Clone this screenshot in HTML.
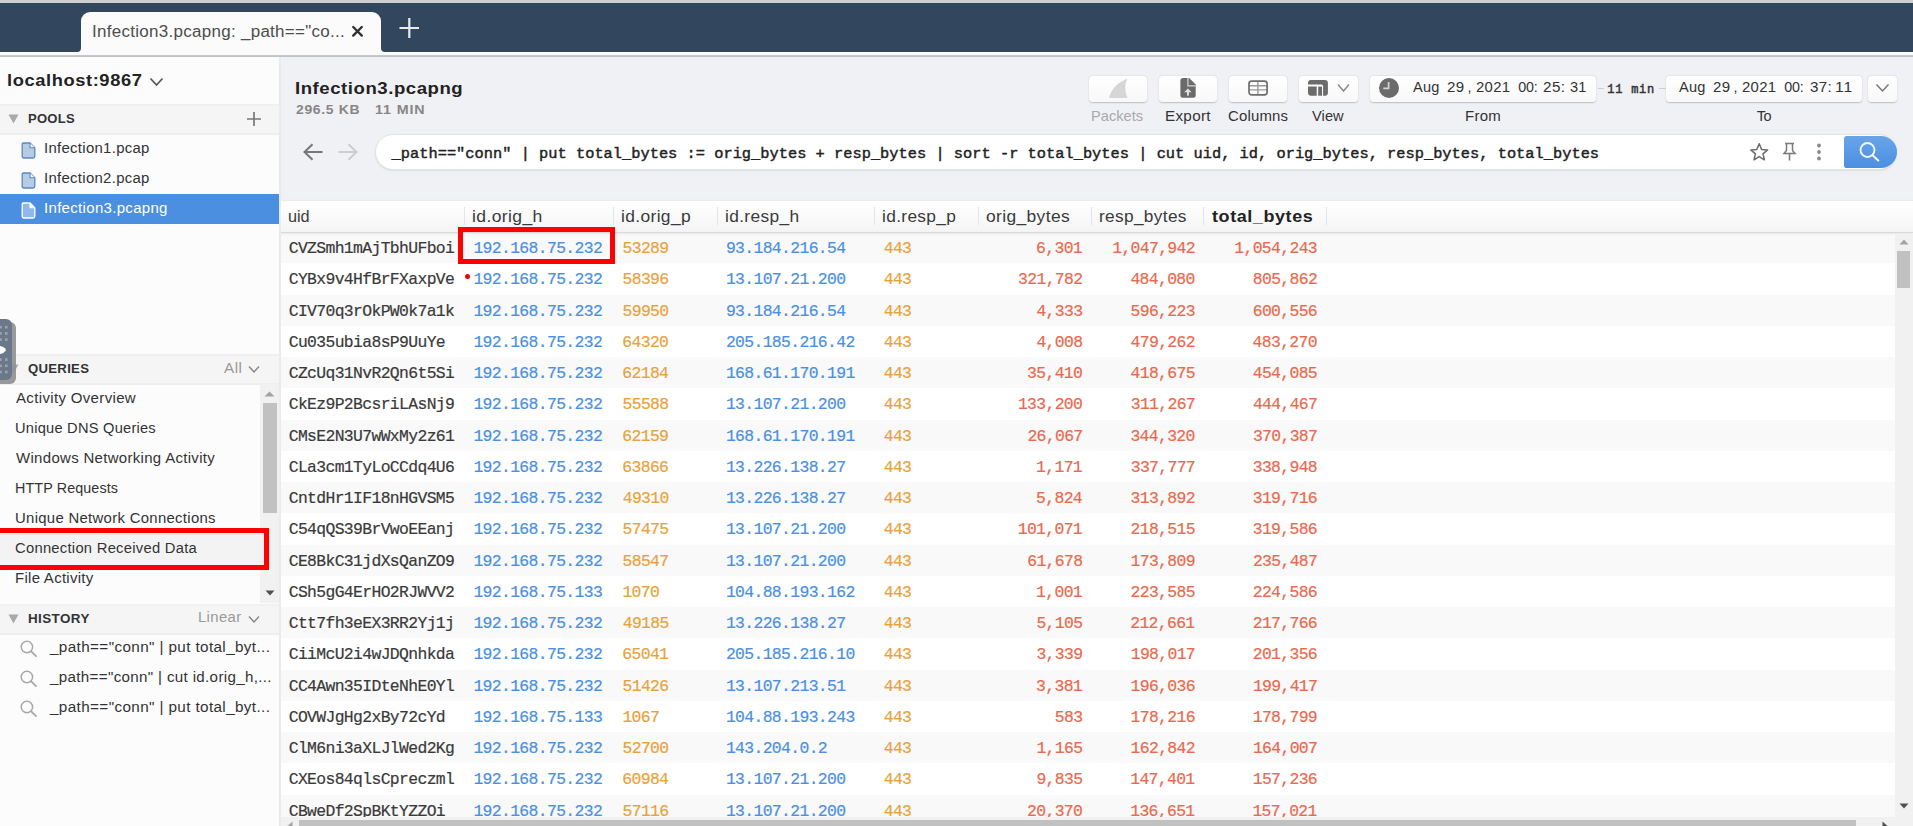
<!DOCTYPE html>
<html><head><meta charset="utf-8"><style>
html,body{margin:0;padding:0;}
body{width:1913px;height:826px;overflow:hidden;position:relative;background:#fafafa;font-family:"Liberation Sans",sans-serif;}
svg{overflow:visible}
</style></head><body>
<div style="position:absolute;left:0px;top:0px;width:1913px;height:3px;background:#cfcfcf"></div>
<div style="position:absolute;left:0px;top:3px;width:1913px;height:49px;background:#32465e"></div>
<div style="position:absolute;left:0px;top:51.6px;width:1913px;height:3.4px;background:#fbfbfb"></div>
<div style="position:absolute;left:0px;top:55px;width:1913px;height:2px;background:linear-gradient(#c9cacd,#bfc0c4)"></div>
<div style="position:absolute;left:80.5px;top:11.8px;width:300px;height:40px;background:#fbfbfb;border-radius:9px 9px 0 0"></div>
<div style="position:absolute;left:76.5px;top:46px;width:5px;height:6px;background:#fbfbfb"></div>
<div style="position:absolute;left:70px;top:40px;width:10.5px;height:11.6px;background:#32465e;border-bottom-right-radius:4px"></div>
<div style="position:absolute;left:379.5px;top:46px;width:5px;height:6px;background:#fbfbfb"></div>
<div style="position:absolute;left:380.5px;top:40px;width:10px;height:11.6px;background:#32465e;border-bottom-left-radius:4px"></div>
<svg style="position:absolute;left:351px;top:25px;" width="13" height="13" viewBox="0 0 13 13"><path d="M2.2 2L10.8 10.6M10.8 2L2.2 10.6" stroke="#2e2e2e" stroke-width="2.3" stroke-linecap="round"/></svg>
<svg style="position:absolute;left:399px;top:18px;" width="21" height="21" viewBox="0 0 21 21"><path d="M10.3 0V20M0.5 10H20" stroke="#e9ebef" stroke-width="2.2"/></svg>
<div style="position:absolute;left:0px;top:57px;width:279px;height:769px;background:#fcfcfc"></div>
<div style="position:absolute;left:279px;top:57px;width:2px;height:769px;background:#e9ecef"></div>
<svg style="position:absolute;left:149px;top:77px;" width="15" height="10" viewBox="0 0 15 10"><path d="M1.5 1.5L7.5 8L13.5 1.5" stroke="#555" stroke-width="1.7" fill="none"/></svg>
<div style="position:absolute;left:0px;top:104px;width:279px;height:2px;background:#eef0f2"></div>
<div style="position:absolute;left:0px;top:106px;width:279px;height:27px;background:#f5f5f5"></div>
<div style="position:absolute;left:0px;top:133px;width:279px;height:1.5px;background:#eceef0"></div>
<svg style="position:absolute;left:8px;top:114px;" width="11" height="10" viewBox="0 0 11 10"><path d="M0.5 0.5H10.5L5.5 9.5Z" fill="#a9a9a9"/></svg>
<svg style="position:absolute;left:246px;top:111px;" width="16" height="16" viewBox="0 0 16 16"><path d="M8 1V15M1 8H15" stroke="#777" stroke-width="1.7"/></svg>
<div style="position:absolute;left:0px;top:194px;width:279px;height:30px;background:#4a8fe0"></div>
<svg style="position:absolute;left:21px;top:141.5px;" width="15" height="17" viewBox="0 0 15 17"><path d="M2.2 1H9L13.8 5.8V14.2Q13.8 16 12 16H3Q1.2 16 1.2 14.2V2.2Q1.2 1 2.2 1Z" fill="#b7cbe5" stroke="#5b88c2" stroke-width="1.3"/><path d="M9 1V5.8H13.8" fill="#fafafa" stroke="#5b88c2" stroke-width="1.1"/></svg>
<svg style="position:absolute;left:21px;top:171.5px;" width="15" height="17" viewBox="0 0 15 17"><path d="M2.2 1H9L13.8 5.8V14.2Q13.8 16 12 16H3Q1.2 16 1.2 14.2V2.2Q1.2 1 2.2 1Z" fill="#b7cbe5" stroke="#5b88c2" stroke-width="1.3"/><path d="M9 1V5.8H13.8" fill="#fafafa" stroke="#5b88c2" stroke-width="1.1"/></svg>
<svg style="position:absolute;left:21px;top:201.5px;" width="15" height="17" viewBox="0 0 15 17"><path d="M2.2 1H9L13.8 5.8V14.2Q13.8 16 12 16H3Q1.2 16 1.2 14.2V2.2Q1.2 1 2.2 1Z" fill="#8fb8ec" stroke="#ffffff" stroke-width="1.3"/><path d="M9 1V5.8H13.8" fill="#fafafa" stroke="#ffffff" stroke-width="1.1"/></svg>
<div style="position:absolute;left:0px;top:354px;width:279px;height:2px;background:#eef0f2"></div>
<div style="position:absolute;left:0px;top:356px;width:279px;height:27px;background:#f5f5f5"></div>
<div style="position:absolute;left:0px;top:383px;width:279px;height:1.5px;background:#eceef0"></div>
<svg style="position:absolute;left:8px;top:364px;" width="11" height="10" viewBox="0 0 11 10"><path d="M0.5 0.5H10.5L5.5 9.5Z" fill="#a9a9a9"/></svg>
<svg style="position:absolute;left:248px;top:365px;" width="12" height="9" viewBox="0 0 12 9"><path d="M1 1.5L6 7L11 1.5" stroke="#888" stroke-width="1.5" fill="none"/></svg>
<div style="position:absolute;left:0px;top:533px;width:264px;height:31.7px;background:#f3f3f3"></div>
<div style="position:absolute;left:260px;top:384px;width:19px;height:219px;background:#f1f1f1"></div>
<svg style="position:absolute;left:264px;top:391.3px;" width="11" height="6" viewBox="0 0 11 6"><path d="M0.5 5.5L5.5 0.5L10.5 5.5Z" fill="#a3a3a3"/></svg>
<div style="position:absolute;left:263px;top:403px;width:13.5px;height:110px;background:#c1c1c1"></div>
<svg style="position:absolute;left:265px;top:590px;" width="10" height="6" viewBox="0 0 10 6"><path d="M0.5 0.5H9.5L5 5.5Z" fill="#505050"/></svg>
<div style="position:absolute;left:0px;top:604px;width:279px;height:2px;background:#eef0f2"></div>
<div style="position:absolute;left:0px;top:606px;width:279px;height:27px;background:#f5f5f5"></div>
<div style="position:absolute;left:0px;top:633px;width:279px;height:1.5px;background:#eceef0"></div>
<svg style="position:absolute;left:8px;top:614px;" width="11" height="10" viewBox="0 0 11 10"><path d="M0.5 0.5H10.5L5.5 9.5Z" fill="#a9a9a9"/></svg>
<svg style="position:absolute;left:248px;top:615px;" width="12" height="9" viewBox="0 0 12 9"><path d="M1 1.5L6 7L11 1.5" stroke="#888" stroke-width="1.5" fill="none"/></svg>
<svg style="position:absolute;left:20px;top:641px;" width="18" height="17" viewBox="0 0 18 17"><circle cx="6.9" cy="6" r="5.7" stroke="#a8a8a8" stroke-width="1.5" fill="none"/><path d="M11.2 10.4L16 15.2" stroke="#a8a8a8" stroke-width="1.8" stroke-linecap="round"/></svg>
<svg style="position:absolute;left:20px;top:671px;" width="18" height="17" viewBox="0 0 18 17"><circle cx="6.9" cy="6" r="5.7" stroke="#a8a8a8" stroke-width="1.5" fill="none"/><path d="M11.2 10.4L16 15.2" stroke="#a8a8a8" stroke-width="1.8" stroke-linecap="round"/></svg>
<svg style="position:absolute;left:20px;top:701px;" width="18" height="17" viewBox="0 0 18 17"><circle cx="6.9" cy="6" r="5.7" stroke="#a8a8a8" stroke-width="1.5" fill="none"/><path d="M11.2 10.4L16 15.2" stroke="#a8a8a8" stroke-width="1.8" stroke-linecap="round"/></svg>
<div style="position:absolute;left:-6px;top:528px;width:275.2px;height:41.7px;box-sizing:border-box;border:5px solid #fe0000"></div>
<div style="position:absolute;left:-10px;top:322px;width:25.5px;height:62px;background:#8f8f8f;border-radius:6px;opacity:0.9"></div>
<div style="position:absolute;left:-10px;top:318.7px;width:22px;height:61.5px;background:#6b7889;border-radius:6px"></div>
<svg style="position:absolute;left:0px;top:318px;" width="14" height="62" viewBox="0 0 14 62"><rect x="-0.8" y="7.899999999999989" width="2.6" height="2.6" fill="#9aa4b1"/><rect x="5.0" y="7.899999999999989" width="2.6" height="2.6" fill="#9aa4b1"/><rect x="-0.8" y="14.099999999999977" width="2.6" height="2.6" fill="#9aa4b1"/><rect x="5.0" y="14.099999999999977" width="2.6" height="2.6" fill="#9aa4b1"/><rect x="-0.8" y="20.300000000000022" width="2.6" height="2.6" fill="#9aa4b1"/><rect x="5.0" y="20.300000000000022" width="2.6" height="2.6" fill="#9aa4b1"/><rect x="-0.8" y="40.300000000000026" width="2.6" height="2.6" fill="#9aa4b1"/><rect x="5.0" y="40.300000000000026" width="2.6" height="2.6" fill="#9aa4b1"/><rect x="-0.8" y="46.500000000000014" width="2.6" height="2.6" fill="#9aa4b1"/><rect x="5.0" y="46.500000000000014" width="2.6" height="2.6" fill="#9aa4b1"/><rect x="-0.8" y="52.7" width="2.6" height="2.6" fill="#9aa4b1"/><rect x="5.0" y="52.7" width="2.6" height="2.6" fill="#9aa4b1"/><path d="M-1 28Q4 28 6 32Q4 36 -1 36Z" fill="#ffffff"/></svg>
<div style="position:absolute;left:281px;top:57px;width:1632px;height:144px;background:#f0f1f5"></div>
<div style="position:absolute;left:1088.8px;top:75.5px;width:58.100000000000136px;height:26.299999999999997px;box-sizing:border-box;border-radius:4px;background:linear-gradient(#ffffff,#f8f8f8);box-shadow:0 0.5px 1.5px rgba(0,0,0,0.22)"></div>
<div style="position:absolute;left:1158.6px;top:75.5px;width:58.40000000000009px;height:26.299999999999997px;box-sizing:border-box;border-radius:4px;background:linear-gradient(#ffffff,#f8f8f8);box-shadow:0 0.5px 1.5px rgba(0,0,0,0.22)"></div>
<div style="position:absolute;left:1228.8px;top:75.5px;width:58.100000000000136px;height:26.299999999999997px;box-sizing:border-box;border-radius:4px;background:linear-gradient(#ffffff,#f8f8f8);box-shadow:0 0.5px 1.5px rgba(0,0,0,0.22)"></div>
<div style="position:absolute;left:1298.6px;top:75.5px;width:59.40000000000009px;height:26.299999999999997px;box-sizing:border-box;border-radius:4px;background:linear-gradient(#ffffff,#f8f8f8);box-shadow:0 0.5px 1.5px rgba(0,0,0,0.22)"></div>
<div style="position:absolute;left:1370px;top:75.5px;width:225.70000000000005px;height:26.299999999999997px;box-sizing:border-box;border-radius:4px;background:linear-gradient(#ffffff,#f8f8f8);box-shadow:0 0.5px 1.5px rgba(0,0,0,0.22)"></div>
<div style="position:absolute;left:1666.2px;top:75.5px;width:195.79999999999995px;height:26.299999999999997px;box-sizing:border-box;border-radius:4px;background:linear-gradient(#ffffff,#f8f8f8);box-shadow:0 0.5px 1.5px rgba(0,0,0,0.22)"></div>
<div style="position:absolute;left:1867.7px;top:75.5px;width:29.09999999999991px;height:26.299999999999997px;box-sizing:border-box;border-radius:4px;background:linear-gradient(#ffffff,#f8f8f8);box-shadow:0 0.5px 1.5px rgba(0,0,0,0.22)"></div>
<svg style="position:absolute;left:1108px;top:77px;" width="21" height="22" viewBox="0 0 21 22"><path d="M1 21Q4 8 19.5 1.5Q15 10 19.5 21Z" fill="#d6d6d6"/></svg>
<svg style="position:absolute;left:1179px;top:77px;" width="18" height="22" viewBox="0 0 18 22"><path d="M4 1.1H10.2L16.7 7.6V18.2Q16.7 20.7 14.2 20.7H3.9Q1.4 20.7 1.4 18.2V3.6Q1.4 1.1 4 1.1Z" fill="#6b6b6b"/><path d="M8.9 1.1V8.9H16.7" stroke="#d8d8d8" stroke-width="1.2" fill="none"/><path d="M5.2 15.2L8.9 11.4L12.6 15.2Z" fill="#e4e4e4"/><rect x="8" y="14.6" width="1.9" height="4" fill="#e4e4e4"/></svg>
<svg style="position:absolute;left:1247px;top:79px;" width="22" height="18" viewBox="0 0 22 18"><path d="M10.9 2V16M2 6.7H20M2 10.9H20" stroke="#9a9a9a" stroke-width="1.4"/><rect x="2" y="2.05" width="18.1" height="13.9" rx="2.6" stroke="#6e6e6e" stroke-width="1.7" fill="none"/></svg>
<svg style="position:absolute;left:1307px;top:79px;" width="22" height="18" viewBox="0 0 22 18"><path d="M1 4.1Q1 1.1 4 1.1H17.9Q20.9 1.1 20.9 4.1V13.7Q20.9 16.7 17.9 16.7H16.1V7.2Q16.1 5.4 14.3 5.4H1Z" fill="#6b6b6b"/><path d="M1 7.6H9.7V16.7H4Q1 16.7 1 13.7Z" fill="#6b6b6b"/><rect x="11.2" y="7.6" width="3.8" height="9.1" fill="#6b6b6b"/></svg>
<svg style="position:absolute;left:1337px;top:83px;" width="13" height="10" viewBox="0 0 13 10"><path d="M1 1.5L6.5 8L12 1.5" stroke="#8a8a8a" stroke-width="1.5" fill="none"/></svg>
<svg style="position:absolute;left:1378px;top:77px;" width="22" height="22" viewBox="0 0 22 22"><circle cx="11" cy="11" r="10" fill="#6b6b6b"/><path d="M10.6 5V11.3H5.3" stroke="#d4d4d4" stroke-width="1.7" fill="none"/></svg>
<svg style="position:absolute;left:1875px;top:83px;" width="15" height="10" viewBox="0 0 15 10"><path d="M1.5 1.5L7.5 8L13.5 1.5" stroke="#777" stroke-width="1.5" fill="none"/></svg>
<div style="position:absolute;left:1597.5px;top:88px;width:6px;height:1px;background:#cfcfcf"></div>
<div style="position:absolute;left:1658.5px;top:88px;width:7px;height:1px;background:#cfcfcf"></div>
<svg style="position:absolute;left:302px;top:142px;" width="22" height="20" viewBox="0 0 22 20"><path d="M20.5 10H3M10.5 2.2L2.5 10L10.5 17.8" stroke="#767676" stroke-width="2" fill="none"/></svg>
<svg style="position:absolute;left:337px;top:142px;" width="22" height="20" viewBox="0 0 22 20"><path d="M1.5 10H19M11.5 2.2L19.5 10L11.5 17.8" stroke="#cdcdcd" stroke-width="2" fill="none"/></svg>
<div style="position:absolute;left:375.3px;top:133.6px;width:1521.7px;height:36px;box-sizing:border-box;border:1px solid #e3e3e3;border-radius:18px;background:#ffffff;box-shadow:0 1px 1.5px rgba(0,0,0,0.08)"></div>
<div style="position:absolute;left:1844.3px;top:135.6px;width:52.5px;height:32.4px;border-radius:3px 17px 17px 3px;background:linear-gradient(#6aa4e9,#4a8fe1)"></div>
<svg style="position:absolute;left:1857px;top:140px;" width="25" height="24" viewBox="0 0 25 24"><circle cx="10.5" cy="10" r="7" stroke="#f4f7fb" stroke-width="1.9" fill="none"/><path d="M15.6 15.3L21.2 20.6" stroke="#f4f7fb" stroke-width="2.1" stroke-linecap="round"/></svg>
<svg style="position:absolute;left:1749px;top:142px;" width="21" height="20" viewBox="0 0 21 20"><path d="M10.2 1.8L12.6 7.4L18.6 7.9L14 11.9L15.4 17.8L10.2 14.6L5 17.8L6.4 11.9L1.8 7.9L7.8 7.4Z" stroke="#6b6b6b" stroke-width="1.5" fill="none" stroke-linejoin="round"/></svg>
<svg style="position:absolute;left:1782px;top:142px;" width="15" height="20" viewBox="0 0 15 20"><path d="M3 1.5H12M4.5 1.5V8.5L2 11.5H13L10.5 8.5V1.5M7.5 11.5V18.5" stroke="#7a7a7a" stroke-width="1.5" fill="none"/></svg>
<svg style="position:absolute;left:1815px;top:143px;" width="8" height="18" viewBox="0 0 8 18"><circle cx="4" cy="2.5" r="1.9" fill="#8a8a8a"/><circle cx="4" cy="9" r="1.9" fill="#8a8a8a"/><circle cx="4" cy="15.5" r="1.9" fill="#8a8a8a"/></svg>
<div style="position:absolute;left:281px;top:232px;width:1613.5px;height:585px;background:#ffffff"></div>
<div style="position:absolute;left:281px;top:232.0px;width:1613.5px;height:31.25px;background:#f9f9f9"></div>
<div style="position:absolute;left:281px;top:294.5px;width:1613.5px;height:31.25px;background:#f9f9f9"></div>
<div style="position:absolute;left:281px;top:357.0px;width:1613.5px;height:31.25px;background:#f9f9f9"></div>
<div style="position:absolute;left:281px;top:419.5px;width:1613.5px;height:31.25px;background:#f9f9f9"></div>
<div style="position:absolute;left:281px;top:482.0px;width:1613.5px;height:31.25px;background:#f9f9f9"></div>
<div style="position:absolute;left:281px;top:544.5px;width:1613.5px;height:31.25px;background:#f9f9f9"></div>
<div style="position:absolute;left:281px;top:607.0px;width:1613.5px;height:31.25px;background:#f9f9f9"></div>
<div style="position:absolute;left:281px;top:669.5px;width:1613.5px;height:31.25px;background:#f9f9f9"></div>
<div style="position:absolute;left:281px;top:732.0px;width:1613.5px;height:31.25px;background:#f9f9f9"></div>
<div style="position:absolute;left:281px;top:794.5px;width:1613.5px;height:31.25px;background:#f9f9f9"></div>
<div style="position:absolute;left:281px;top:198.5px;width:1632px;height:2.5px;background:linear-gradient(#f0f1f5,#e9eaec)"></div>
<div style="position:absolute;left:281px;top:201px;width:1632px;height:31.5px;background:linear-gradient(#ffffff,#f4f4f4)"></div>
<div style="position:absolute;left:281px;top:232.2px;width:1632px;height:1.3px;background:#d9d9d9;box-shadow:0 1px 2px rgba(0,0,0,0.10)"></div>
<div style="position:absolute;left:464.1px;top:207px;width:1px;height:18px;background:#e1e4e8"></div>
<div style="position:absolute;left:613.1px;top:207px;width:1px;height:18px;background:#e1e4e8"></div>
<div style="position:absolute;left:716.6px;top:207px;width:1px;height:18px;background:#e1e4e8"></div>
<div style="position:absolute;left:874.2px;top:207px;width:1px;height:18px;background:#e1e4e8"></div>
<div style="position:absolute;left:978.2px;top:207px;width:1px;height:18px;background:#e1e4e8"></div>
<div style="position:absolute;left:1090.7px;top:207px;width:1px;height:18px;background:#e1e4e8"></div>
<div style="position:absolute;left:1203.2px;top:207px;width:1px;height:18px;background:#e1e4e8"></div>
<div style="position:absolute;left:1325.9px;top:207px;width:1px;height:18px;background:#e1e4e8"></div>
<div style="position:absolute;left:464.6px;top:273.6px;width:5.2px;height:5.2px;border-radius:50%;background:#f00000"></div>
<div style="position:absolute;left:458px;top:227px;width:157px;height:37px;box-sizing:border-box;border:5px solid #fe0000"></div>
<div style="position:absolute;left:1894.5px;top:233.5px;width:18.5px;height:583.5px;background:#f1f1f1"></div>
<svg style="position:absolute;left:1898.5px;top:238.5px;" width="10" height="6" viewBox="0 0 10 6"><path d="M0.5 5.5L5 0.5L9.5 5.5Z" fill="#a3a3a3"/></svg>
<div style="position:absolute;left:1897px;top:251px;width:13.3px;height:37px;background:#c1c1c1"></div>
<svg style="position:absolute;left:1898.5px;top:803px;" width="10" height="6" viewBox="0 0 10 6"><path d="M0.5 0.5H9.5L5 5.5Z" fill="#505050"/></svg>
<span style="position:absolute;left:91.72px;top:23.58px;font-family:'Liberation Sans';font-size:16px;font-weight:400;color:#4d4d4d;letter-spacing:0.277px;line-height:1;white-space:pre;transform:scaleX(1.0602);transform-origin:0 0;">Infection3.pcapng: _path==&quot;co...</span>
<span style="position:absolute;left:7.49px;top:72.57px;font-family:'Liberation Sans';font-size:16.6px;font-weight:700;color:#222;letter-spacing:0.542px;line-height:1;white-space:pre;transform:scaleX(1.1025);transform-origin:0 0;">localhost:9867</span>
<span style="position:absolute;left:27.77px;top:112.58px;font-family:'Liberation Sans';font-size:12.6px;font-weight:700;color:#333;letter-spacing:0.241px;line-height:1;white-space:pre;transform:scaleX(1.0349);transform-origin:0 0;">POOLS</span>
<span style="position:absolute;left:43.52px;top:141.25px;font-family:'Liberation Sans';font-size:14px;font-weight:400;color:#333;letter-spacing:0.277px;line-height:1;white-space:pre;transform:scaleX(1.0665);transform-origin:0 0;">Infection1.pcap</span>
<span style="position:absolute;left:43.52px;top:171.25px;font-family:'Liberation Sans';font-size:14px;font-weight:400;color:#333;letter-spacing:0.277px;line-height:1;white-space:pre;transform:scaleX(1.0665);transform-origin:0 0;">Infection2.pcap</span>
<span style="position:absolute;left:43.52px;top:201.25px;font-family:'Liberation Sans';font-size:14px;font-weight:400;color:#ffffff;letter-spacing:0.298px;line-height:1;white-space:pre;transform:scaleX(1.0706);transform-origin:0 0;">Infection3.pcapng</span>
<span style="position:absolute;left:28.08px;top:362.58px;font-family:'Liberation Sans';font-size:12.6px;font-weight:700;color:#333;letter-spacing:0.267px;line-height:1;white-space:pre;transform:scaleX(1.0451);transform-origin:0 0;">QUERIES</span>
<span style="position:absolute;left:224.00px;top:361.57px;font-family:'Liberation Sans';font-size:13.8px;font-weight:400;color:#9a9a9a;letter-spacing:0.458px;line-height:1;white-space:pre;transform:scaleX(1.1049);transform-origin:0 0;">All</span>
<span style="position:absolute;left:15.80px;top:391.35px;font-family:'Liberation Sans';font-size:14px;font-weight:400;color:#333;letter-spacing:0.306px;line-height:1;white-space:pre;transform:scaleX(1.0739);transform-origin:0 0;">Activity Overview</span>
<span style="position:absolute;left:14.75px;top:421.35px;font-family:'Liberation Sans';font-size:14px;font-weight:400;color:#333;letter-spacing:0.222px;line-height:1;white-space:pre;transform:scaleX(1.0459);transform-origin:0 0;">Unique DNS Queries</span>
<span style="position:absolute;left:15.80px;top:451.35px;font-family:'Liberation Sans';font-size:14px;font-weight:400;color:#333;letter-spacing:0.297px;line-height:1;white-space:pre;transform:scaleX(1.0693);transform-origin:0 0;">Windows Networking Activity</span>
<span style="position:absolute;left:14.68px;top:481.35px;font-family:'Liberation Sans';font-size:14px;font-weight:400;color:#333;letter-spacing:0.118px;line-height:1;white-space:pre;transform:scaleX(1.0221);transform-origin:0 0;">HTTP Requests</span>
<span style="position:absolute;left:14.74px;top:511.35px;font-family:'Liberation Sans';font-size:14px;font-weight:400;color:#333;letter-spacing:0.287px;line-height:1;white-space:pre;transform:scaleX(1.0637);transform-origin:0 0;">Unique Network Connections</span>
<span style="position:absolute;left:15.06px;top:541.35px;font-family:'Liberation Sans';font-size:14px;font-weight:400;color:#333;letter-spacing:0.250px;line-height:1;white-space:pre;transform:scaleX(1.0548);transform-origin:0 0;">Connection Received Data</span>
<span style="position:absolute;left:14.62px;top:571.35px;font-family:'Liberation Sans';font-size:14px;font-weight:400;color:#333;letter-spacing:0.256px;line-height:1;white-space:pre;transform:scaleX(1.0707);transform-origin:0 0;">File Activity</span>
<span style="position:absolute;left:27.75px;top:612.58px;font-family:'Liberation Sans';font-size:12.6px;font-weight:700;color:#333;letter-spacing:0.375px;line-height:1;white-space:pre;transform:scaleX(1.0661);transform-origin:0 0;">HISTORY</span>
<span style="position:absolute;left:198.12px;top:610.57px;font-family:'Liberation Sans';font-size:13.8px;font-weight:400;color:#9a9a9a;letter-spacing:0.345px;line-height:1;white-space:pre;transform:scaleX(1.0750);transform-origin:0 0;">Linear</span>
<span style="position:absolute;left:50.13px;top:640.35px;font-family:'Liberation Sans';font-size:14px;font-weight:400;color:#333;letter-spacing:0.341px;line-height:1;white-space:pre;transform:scaleX(1.0910);transform-origin:0 0;">_path==&quot;conn&quot; | put total_byt...</span>
<span style="position:absolute;left:50.12px;top:670.35px;font-family:'Liberation Sans';font-size:14px;font-weight:400;color:#333;letter-spacing:0.307px;line-height:1;white-space:pre;transform:scaleX(1.0821);transform-origin:0 0;">_path==&quot;conn&quot; | cut id.orig_h,...</span>
<span style="position:absolute;left:50.13px;top:700.35px;font-family:'Liberation Sans';font-size:14px;font-weight:400;color:#333;letter-spacing:0.341px;line-height:1;white-space:pre;transform:scaleX(1.0910);transform-origin:0 0;">_path==&quot;conn&quot; | put total_byt...</span>
<span style="position:absolute;left:294.50px;top:80.11px;font-family:'Liberation Sans';font-size:17px;font-weight:700;color:#222;letter-spacing:0.504px;line-height:1;white-space:pre;transform:scaleX(1.0923);transform-origin:0 0;">Infection3.pcapng</span>
<span style="position:absolute;left:295.54px;top:103.60px;font-family:'Liberation Sans';font-size:12.2px;font-weight:700;color:#868686;letter-spacing:0.603px;line-height:1;white-space:pre;transform:scaleX(1.1430);transform-origin:0 0;">296.5 KB</span>
<span style="position:absolute;left:375.38px;top:103.60px;font-family:'Liberation Sans';font-size:12.2px;font-weight:700;color:#868686;letter-spacing:0.728px;line-height:1;white-space:pre;transform:scaleX(1.1722);transform-origin:0 0;">11 MIN</span>
<span style="position:absolute;left:1413.20px;top:79.80px;font-family:'Liberation Sans';font-size:14.3px;font-weight:400;color:#333;letter-spacing:0.159px;line-height:1;white-space:pre;transform:scaleX(1.0197);transform-origin:0 0;">Aug</span>
<span style="position:absolute;left:1447.06px;top:79.80px;font-family:'Liberation Sans';font-size:14.3px;font-weight:400;color:#333;letter-spacing:0.474px;line-height:1;white-space:pre;transform:scaleX(1.0514);transform-origin:0 0;">29</span>
<span style="position:absolute;left:1467.50px;top:79.80px;font-family:'Liberation Sans';font-size:14.3px;font-weight:400;color:#333;letter-spacing:0.000px;line-height:1;white-space:pre;">,</span>
<span style="position:absolute;left:1476.17px;top:79.80px;font-family:'Liberation Sans';font-size:14.3px;font-weight:400;color:#333;letter-spacing:0.274px;line-height:1;white-space:pre;transform:scaleX(1.0422);transform-origin:0 0;">2021</span>
<span style="position:absolute;left:1518.20px;top:79.80px;font-family:'Liberation Sans';font-size:14.3px;font-weight:400;color:#333;letter-spacing:-0.153px;line-height:1;white-space:pre;">00:</span>
<span style="position:absolute;left:1543.35px;top:79.80px;font-family:'Liberation Sans';font-size:14.3px;font-weight:400;color:#333;letter-spacing:0.374px;line-height:1;white-space:pre;transform:scaleX(1.0668);transform-origin:0 0;">25:</span>
<span style="position:absolute;left:1569.59px;top:79.80px;font-family:'Liberation Sans';font-size:14.3px;font-weight:400;color:#333;letter-spacing:0.214px;line-height:1;white-space:pre;transform:scaleX(1.0222);transform-origin:0 0;">31</span>
<span style="position:absolute;left:1679.20px;top:79.80px;font-family:'Liberation Sans';font-size:14.3px;font-weight:400;color:#333;letter-spacing:0.159px;line-height:1;white-space:pre;transform:scaleX(1.0197);transform-origin:0 0;">Aug</span>
<span style="position:absolute;left:1713.06px;top:79.80px;font-family:'Liberation Sans';font-size:14.3px;font-weight:400;color:#333;letter-spacing:0.474px;line-height:1;white-space:pre;transform:scaleX(1.0514);transform-origin:0 0;">29</span>
<span style="position:absolute;left:1733.50px;top:79.80px;font-family:'Liberation Sans';font-size:14.3px;font-weight:400;color:#333;letter-spacing:0.000px;line-height:1;white-space:pre;">,</span>
<span style="position:absolute;left:1742.17px;top:79.80px;font-family:'Liberation Sans';font-size:14.3px;font-weight:400;color:#333;letter-spacing:0.274px;line-height:1;white-space:pre;transform:scaleX(1.0422);transform-origin:0 0;">2021</span>
<span style="position:absolute;left:1784.20px;top:79.80px;font-family:'Liberation Sans';font-size:14.3px;font-weight:400;color:#333;letter-spacing:-0.153px;line-height:1;white-space:pre;">00:</span>
<span style="position:absolute;left:1809.57px;top:79.80px;font-family:'Liberation Sans';font-size:14.3px;font-weight:400;color:#333;letter-spacing:0.339px;line-height:1;white-space:pre;transform:scaleX(1.0595);transform-origin:0 0;">37:</span>
<span style="position:absolute;left:1835.00px;top:79.80px;font-family:'Liberation Sans';font-size:14.3px;font-weight:400;color:#333;letter-spacing:0.770px;line-height:1;white-space:pre;transform:scaleX(1.0959);transform-origin:0 0;">11</span>
<span style="position:absolute;left:1607.20px;top:83.60px;font-family:'Liberation Mono';font-size:12px;font-weight:400;color:#333;letter-spacing:0.779px;line-height:1;white-space:pre;-webkit-text-stroke:0.45px #333;">11 min</span>
<span style="position:absolute;left:1091.39px;top:108.55px;font-family:'Liberation Sans';font-size:14.5px;font-weight:400;color:#a9a9a9;letter-spacing:0.038px;line-height:1;white-space:pre;transform:scaleX(1.0069);transform-origin:0 0;">Packets</span>
<span style="position:absolute;left:1164.84px;top:108.55px;font-family:'Liberation Sans';font-size:14.5px;font-weight:400;color:#333;letter-spacing:0.268px;line-height:1;white-space:pre;transform:scaleX(1.0518);transform-origin:0 0;">Export</span>
<span style="position:absolute;left:1227.68px;top:108.55px;font-family:'Liberation Sans';font-size:14.5px;font-weight:400;color:#333;letter-spacing:0.183px;line-height:1;white-space:pre;transform:scaleX(1.0303);transform-origin:0 0;">Columns</span>
<span style="position:absolute;left:1312.40px;top:108.55px;font-family:'Liberation Sans';font-size:14.5px;font-weight:400;color:#333;letter-spacing:0.067px;line-height:1;white-space:pre;transform:scaleX(1.0097);transform-origin:0 0;">View</span>
<span style="position:absolute;left:1464.96px;top:108.55px;font-family:'Liberation Sans';font-size:14.5px;font-weight:400;color:#333;letter-spacing:0.238px;line-height:1;white-space:pre;transform:scaleX(1.0349);transform-origin:0 0;">From</span>
<span style="position:absolute;left:1756.70px;top:108.55px;font-family:'Liberation Sans';font-size:14.5px;font-weight:400;color:#333;letter-spacing:-0.450px;line-height:1;white-space:pre;">To</span>
<span style="position:absolute;left:391.60px;top:146.54px;font-family:'Liberation Mono';font-size:15.33px;font-weight:400;color:#222;letter-spacing:0.019px;line-height:1;white-space:pre;-webkit-text-stroke:0.45px #222;">_path==&quot;conn&quot; | put total_bytes := orig_bytes + resp_bytes | sort -r total_bytes | cut uid, id, orig_bytes, resp_bytes, total_bytes</span>
<span style="position:absolute;left:287.90px;top:208.00px;font-family:'Liberation Sans';font-size:16.3px;font-weight:400;color:#3a3a3a;letter-spacing:0.000px;line-height:1;white-space:pre;">uid</span>
<span style="position:absolute;left:472.22px;top:208.00px;font-family:'Liberation Sans';font-size:16.3px;font-weight:400;color:#3a3a3a;letter-spacing:0.359px;line-height:1;white-space:pre;transform:scaleX(1.0767);transform-origin:0 0;">id.orig_h</span>
<span style="position:absolute;left:621.03px;top:208.00px;font-family:'Liberation Sans';font-size:16.3px;font-weight:400;color:#3a3a3a;letter-spacing:0.329px;line-height:1;white-space:pre;transform:scaleX(1.0694);transform-origin:0 0;">id.orig_p</span>
<span style="position:absolute;left:724.54px;top:208.00px;font-family:'Liberation Sans';font-size:16.3px;font-weight:400;color:#3a3a3a;letter-spacing:0.325px;line-height:1;white-space:pre;transform:scaleX(1.0637);transform-origin:0 0;">id.resp_h</span>
<span style="position:absolute;left:882.14px;top:208.00px;font-family:'Liberation Sans';font-size:16.3px;font-weight:400;color:#3a3a3a;letter-spacing:0.321px;line-height:1;white-space:pre;transform:scaleX(1.0625);transform-origin:0 0;">id.resp_p</span>
<span style="position:absolute;left:986.46px;top:208.00px;font-family:'Liberation Sans';font-size:16.3px;font-weight:400;color:#3a3a3a;letter-spacing:0.351px;line-height:1;white-space:pre;transform:scaleX(1.0684);transform-origin:0 0;">orig_bytes</span>
<span style="position:absolute;left:1098.54px;top:208.00px;font-family:'Liberation Sans';font-size:16.3px;font-weight:400;color:#3a3a3a;letter-spacing:0.324px;line-height:1;white-space:pre;transform:scaleX(1.0592);transform-origin:0 0;">resp_bytes</span>
<span style="position:absolute;left:1211.79px;top:208.00px;font-family:'Liberation Sans';font-size:16.3px;font-weight:700;color:#222;letter-spacing:0.533px;line-height:1;white-space:pre;transform:scaleX(1.1035);transform-origin:0 0;">total_bytes</span>
<span style="position:absolute;left:288.70px;top:240.52px;font-family:'Liberation Mono';font-size:16.4px;font-weight:400;color:#3a3a3a;letter-spacing:-0.640px;line-height:1;white-space:pre;-webkit-text-stroke:0.2px #3a3a3a;">CVZSmh1mAjTbhUFboi</span>
<span style="position:absolute;left:473.40px;top:240.52px;font-family:'Liberation Mono';font-size:16.4px;font-weight:400;color:#4a90e2;letter-spacing:-0.640px;line-height:1;white-space:pre;-webkit-text-stroke:0.2px #4a90e2;">192.168.75.232</span>
<span style="position:absolute;left:622.50px;top:240.52px;font-family:'Liberation Mono';font-size:16.4px;font-weight:400;color:#e9a23b;letter-spacing:-0.640px;line-height:1;white-space:pre;-webkit-text-stroke:0.2px #e9a23b;">53289</span>
<span style="position:absolute;left:725.90px;top:240.52px;font-family:'Liberation Mono';font-size:16.4px;font-weight:400;color:#4a90e2;letter-spacing:-0.640px;line-height:1;white-space:pre;-webkit-text-stroke:0.2px #4a90e2;">93.184.216.54</span>
<span style="position:absolute;left:883.70px;top:240.52px;font-family:'Liberation Mono';font-size:16.4px;font-weight:400;color:#e9a23b;letter-spacing:-0.640px;line-height:1;white-space:pre;-webkit-text-stroke:0.2px #e9a23b;">443</span>
<span style="position:absolute;left:1036.09px;top:240.52px;font-family:'Liberation Mono';font-size:16.4px;font-weight:400;color:#e9694d;letter-spacing:-0.640px;line-height:1;white-space:pre;-webkit-text-stroke:0.2px #e9694d;">6,301</span>
<span style="position:absolute;left:1112.19px;top:240.52px;font-family:'Liberation Mono';font-size:16.4px;font-weight:400;color:#e9694d;letter-spacing:-0.640px;line-height:1;white-space:pre;-webkit-text-stroke:0.2px #e9694d;">1,047,942</span>
<span style="position:absolute;left:1234.29px;top:240.52px;font-family:'Liberation Mono';font-size:16.4px;font-weight:400;color:#e9694d;letter-spacing:-0.640px;line-height:1;white-space:pre;-webkit-text-stroke:0.2px #e9694d;">1,054,243</span>
<span style="position:absolute;left:288.70px;top:271.77px;font-family:'Liberation Mono';font-size:16.4px;font-weight:400;color:#3a3a3a;letter-spacing:-0.640px;line-height:1;white-space:pre;-webkit-text-stroke:0.2px #3a3a3a;">CYBx9v4HfBrFXaxpVe</span>
<span style="position:absolute;left:473.40px;top:271.77px;font-family:'Liberation Mono';font-size:16.4px;font-weight:400;color:#4a90e2;letter-spacing:-0.640px;line-height:1;white-space:pre;-webkit-text-stroke:0.2px #4a90e2;">192.168.75.232</span>
<span style="position:absolute;left:622.50px;top:271.77px;font-family:'Liberation Mono';font-size:16.4px;font-weight:400;color:#e9a23b;letter-spacing:-0.640px;line-height:1;white-space:pre;-webkit-text-stroke:0.2px #e9a23b;">58396</span>
<span style="position:absolute;left:725.90px;top:271.77px;font-family:'Liberation Mono';font-size:16.4px;font-weight:400;color:#4a90e2;letter-spacing:-0.640px;line-height:1;white-space:pre;-webkit-text-stroke:0.2px #4a90e2;">13.107.21.200</span>
<span style="position:absolute;left:883.70px;top:271.77px;font-family:'Liberation Mono';font-size:16.4px;font-weight:400;color:#e9a23b;letter-spacing:-0.640px;line-height:1;white-space:pre;-webkit-text-stroke:0.2px #e9a23b;">443</span>
<span style="position:absolute;left:1018.09px;top:271.77px;font-family:'Liberation Mono';font-size:16.4px;font-weight:400;color:#e9694d;letter-spacing:-0.640px;line-height:1;white-space:pre;-webkit-text-stroke:0.2px #e9694d;">321,782</span>
<span style="position:absolute;left:1130.39px;top:271.77px;font-family:'Liberation Mono';font-size:16.4px;font-weight:400;color:#e9694d;letter-spacing:-0.640px;line-height:1;white-space:pre;-webkit-text-stroke:0.2px #e9694d;">484,080</span>
<span style="position:absolute;left:1252.79px;top:271.77px;font-family:'Liberation Mono';font-size:16.4px;font-weight:400;color:#e9694d;letter-spacing:-0.640px;line-height:1;white-space:pre;-webkit-text-stroke:0.2px #e9694d;">805,862</span>
<span style="position:absolute;left:288.70px;top:303.52px;font-family:'Liberation Mono';font-size:16.4px;font-weight:400;color:#3a3a3a;letter-spacing:-0.640px;line-height:1;white-space:pre;-webkit-text-stroke:0.2px #3a3a3a;">CIV70q3rOkPW0k7a1k</span>
<span style="position:absolute;left:473.40px;top:303.52px;font-family:'Liberation Mono';font-size:16.4px;font-weight:400;color:#4a90e2;letter-spacing:-0.640px;line-height:1;white-space:pre;-webkit-text-stroke:0.2px #4a90e2;">192.168.75.232</span>
<span style="position:absolute;left:622.50px;top:303.52px;font-family:'Liberation Mono';font-size:16.4px;font-weight:400;color:#e9a23b;letter-spacing:-0.640px;line-height:1;white-space:pre;-webkit-text-stroke:0.2px #e9a23b;">59950</span>
<span style="position:absolute;left:725.90px;top:303.52px;font-family:'Liberation Mono';font-size:16.4px;font-weight:400;color:#4a90e2;letter-spacing:-0.640px;line-height:1;white-space:pre;-webkit-text-stroke:0.2px #4a90e2;">93.184.216.54</span>
<span style="position:absolute;left:883.70px;top:303.52px;font-family:'Liberation Mono';font-size:16.4px;font-weight:400;color:#e9a23b;letter-spacing:-0.640px;line-height:1;white-space:pre;-webkit-text-stroke:0.2px #e9a23b;">443</span>
<span style="position:absolute;left:1036.39px;top:303.52px;font-family:'Liberation Mono';font-size:16.4px;font-weight:400;color:#e9694d;letter-spacing:-0.640px;line-height:1;white-space:pre;-webkit-text-stroke:0.2px #e9694d;">4,333</span>
<span style="position:absolute;left:1130.49px;top:303.52px;font-family:'Liberation Mono';font-size:16.4px;font-weight:400;color:#e9694d;letter-spacing:-0.640px;line-height:1;white-space:pre;-webkit-text-stroke:0.2px #e9694d;">596,223</span>
<span style="position:absolute;left:1252.69px;top:303.52px;font-family:'Liberation Mono';font-size:16.4px;font-weight:400;color:#e9694d;letter-spacing:-0.640px;line-height:1;white-space:pre;-webkit-text-stroke:0.2px #e9694d;">600,556</span>
<span style="position:absolute;left:288.70px;top:334.52px;font-family:'Liberation Mono';font-size:16.4px;font-weight:400;color:#3a3a3a;letter-spacing:-0.640px;line-height:1;white-space:pre;-webkit-text-stroke:0.2px #3a3a3a;">Cu035ubia8sP9UuYe</span>
<span style="position:absolute;left:473.40px;top:334.52px;font-family:'Liberation Mono';font-size:16.4px;font-weight:400;color:#4a90e2;letter-spacing:-0.640px;line-height:1;white-space:pre;-webkit-text-stroke:0.2px #4a90e2;">192.168.75.232</span>
<span style="position:absolute;left:622.30px;top:334.52px;font-family:'Liberation Mono';font-size:16.4px;font-weight:400;color:#e9a23b;letter-spacing:-0.640px;line-height:1;white-space:pre;-webkit-text-stroke:0.2px #e9a23b;">64320</span>
<span style="position:absolute;left:725.90px;top:334.52px;font-family:'Liberation Mono';font-size:16.4px;font-weight:400;color:#4a90e2;letter-spacing:-0.640px;line-height:1;white-space:pre;-webkit-text-stroke:0.2px #4a90e2;">205.185.216.42</span>
<span style="position:absolute;left:883.70px;top:334.52px;font-family:'Liberation Mono';font-size:16.4px;font-weight:400;color:#e9a23b;letter-spacing:-0.640px;line-height:1;white-space:pre;-webkit-text-stroke:0.2px #e9a23b;">443</span>
<span style="position:absolute;left:1036.39px;top:334.52px;font-family:'Liberation Mono';font-size:16.4px;font-weight:400;color:#e9694d;letter-spacing:-0.640px;line-height:1;white-space:pre;-webkit-text-stroke:0.2px #e9694d;">4,008</span>
<span style="position:absolute;left:1130.59px;top:334.52px;font-family:'Liberation Mono';font-size:16.4px;font-weight:400;color:#e9694d;letter-spacing:-0.640px;line-height:1;white-space:pre;-webkit-text-stroke:0.2px #e9694d;">479,262</span>
<span style="position:absolute;left:1252.59px;top:334.52px;font-family:'Liberation Mono';font-size:16.4px;font-weight:400;color:#e9694d;letter-spacing:-0.640px;line-height:1;white-space:pre;-webkit-text-stroke:0.2px #e9694d;">483,270</span>
<span style="position:absolute;left:288.70px;top:365.52px;font-family:'Liberation Mono';font-size:16.4px;font-weight:400;color:#3a3a3a;letter-spacing:-0.640px;line-height:1;white-space:pre;-webkit-text-stroke:0.2px #3a3a3a;">CZcUq31NvR2Qn6t5Si</span>
<span style="position:absolute;left:473.40px;top:365.52px;font-family:'Liberation Mono';font-size:16.4px;font-weight:400;color:#4a90e2;letter-spacing:-0.640px;line-height:1;white-space:pre;-webkit-text-stroke:0.2px #4a90e2;">192.168.75.232</span>
<span style="position:absolute;left:622.30px;top:365.52px;font-family:'Liberation Mono';font-size:16.4px;font-weight:400;color:#e9a23b;letter-spacing:-0.640px;line-height:1;white-space:pre;-webkit-text-stroke:0.2px #e9a23b;">62184</span>
<span style="position:absolute;left:725.90px;top:365.52px;font-family:'Liberation Mono';font-size:16.4px;font-weight:400;color:#4a90e2;letter-spacing:-0.640px;line-height:1;white-space:pre;-webkit-text-stroke:0.2px #4a90e2;">168.61.170.191</span>
<span style="position:absolute;left:883.70px;top:365.52px;font-family:'Liberation Mono';font-size:16.4px;font-weight:400;color:#e9a23b;letter-spacing:-0.640px;line-height:1;white-space:pre;-webkit-text-stroke:0.2px #e9a23b;">443</span>
<span style="position:absolute;left:1027.09px;top:365.52px;font-family:'Liberation Mono';font-size:16.4px;font-weight:400;color:#e9694d;letter-spacing:-0.640px;line-height:1;white-space:pre;-webkit-text-stroke:0.2px #e9694d;">35,410</span>
<span style="position:absolute;left:1130.49px;top:365.52px;font-family:'Liberation Mono';font-size:16.4px;font-weight:400;color:#e9694d;letter-spacing:-0.640px;line-height:1;white-space:pre;-webkit-text-stroke:0.2px #e9694d;">418,675</span>
<span style="position:absolute;left:1252.69px;top:365.52px;font-family:'Liberation Mono';font-size:16.4px;font-weight:400;color:#e9694d;letter-spacing:-0.640px;line-height:1;white-space:pre;-webkit-text-stroke:0.2px #e9694d;">454,085</span>
<span style="position:absolute;left:288.70px;top:396.77px;font-family:'Liberation Mono';font-size:16.4px;font-weight:400;color:#3a3a3a;letter-spacing:-0.640px;line-height:1;white-space:pre;-webkit-text-stroke:0.2px #3a3a3a;">CkEz9P2BcsriLAsNj9</span>
<span style="position:absolute;left:473.40px;top:396.77px;font-family:'Liberation Mono';font-size:16.4px;font-weight:400;color:#4a90e2;letter-spacing:-0.640px;line-height:1;white-space:pre;-webkit-text-stroke:0.2px #4a90e2;">192.168.75.232</span>
<span style="position:absolute;left:622.50px;top:396.77px;font-family:'Liberation Mono';font-size:16.4px;font-weight:400;color:#e9a23b;letter-spacing:-0.640px;line-height:1;white-space:pre;-webkit-text-stroke:0.2px #e9a23b;">55588</span>
<span style="position:absolute;left:725.90px;top:396.77px;font-family:'Liberation Mono';font-size:16.4px;font-weight:400;color:#4a90e2;letter-spacing:-0.640px;line-height:1;white-space:pre;-webkit-text-stroke:0.2px #4a90e2;">13.107.21.200</span>
<span style="position:absolute;left:883.70px;top:396.77px;font-family:'Liberation Mono';font-size:16.4px;font-weight:400;color:#e9a23b;letter-spacing:-0.640px;line-height:1;white-space:pre;-webkit-text-stroke:0.2px #e9a23b;">443</span>
<span style="position:absolute;left:1017.89px;top:396.77px;font-family:'Liberation Mono';font-size:16.4px;font-weight:400;color:#e9694d;letter-spacing:-0.640px;line-height:1;white-space:pre;-webkit-text-stroke:0.2px #e9694d;">133,200</span>
<span style="position:absolute;left:1130.69px;top:396.77px;font-family:'Liberation Mono';font-size:16.4px;font-weight:400;color:#e9694d;letter-spacing:-0.640px;line-height:1;white-space:pre;-webkit-text-stroke:0.2px #e9694d;">311,267</span>
<span style="position:absolute;left:1252.89px;top:396.77px;font-family:'Liberation Mono';font-size:16.4px;font-weight:400;color:#e9694d;letter-spacing:-0.640px;line-height:1;white-space:pre;-webkit-text-stroke:0.2px #e9694d;">444,467</span>
<span style="position:absolute;left:288.70px;top:428.52px;font-family:'Liberation Mono';font-size:16.4px;font-weight:400;color:#3a3a3a;letter-spacing:-0.640px;line-height:1;white-space:pre;-webkit-text-stroke:0.2px #3a3a3a;">CMsE2N3U7wWxMy2z61</span>
<span style="position:absolute;left:473.40px;top:428.52px;font-family:'Liberation Mono';font-size:16.4px;font-weight:400;color:#4a90e2;letter-spacing:-0.640px;line-height:1;white-space:pre;-webkit-text-stroke:0.2px #4a90e2;">192.168.75.232</span>
<span style="position:absolute;left:622.30px;top:428.52px;font-family:'Liberation Mono';font-size:16.4px;font-weight:400;color:#e9a23b;letter-spacing:-0.640px;line-height:1;white-space:pre;-webkit-text-stroke:0.2px #e9a23b;">62159</span>
<span style="position:absolute;left:725.90px;top:428.52px;font-family:'Liberation Mono';font-size:16.4px;font-weight:400;color:#4a90e2;letter-spacing:-0.640px;line-height:1;white-space:pre;-webkit-text-stroke:0.2px #4a90e2;">168.61.170.191</span>
<span style="position:absolute;left:883.70px;top:428.52px;font-family:'Liberation Mono';font-size:16.4px;font-weight:400;color:#e9a23b;letter-spacing:-0.640px;line-height:1;white-space:pre;-webkit-text-stroke:0.2px #e9a23b;">443</span>
<span style="position:absolute;left:1027.39px;top:428.52px;font-family:'Liberation Mono';font-size:16.4px;font-weight:400;color:#e9694d;letter-spacing:-0.640px;line-height:1;white-space:pre;-webkit-text-stroke:0.2px #e9694d;">26,067</span>
<span style="position:absolute;left:1130.39px;top:428.52px;font-family:'Liberation Mono';font-size:16.4px;font-weight:400;color:#e9694d;letter-spacing:-0.640px;line-height:1;white-space:pre;-webkit-text-stroke:0.2px #e9694d;">344,320</span>
<span style="position:absolute;left:1252.89px;top:428.52px;font-family:'Liberation Mono';font-size:16.4px;font-weight:400;color:#e9694d;letter-spacing:-0.640px;line-height:1;white-space:pre;-webkit-text-stroke:0.2px #e9694d;">370,387</span>
<span style="position:absolute;left:288.70px;top:459.52px;font-family:'Liberation Mono';font-size:16.4px;font-weight:400;color:#3a3a3a;letter-spacing:-0.640px;line-height:1;white-space:pre;-webkit-text-stroke:0.2px #3a3a3a;">CLa3cm1TyLoCCdq4U6</span>
<span style="position:absolute;left:473.40px;top:459.52px;font-family:'Liberation Mono';font-size:16.4px;font-weight:400;color:#4a90e2;letter-spacing:-0.640px;line-height:1;white-space:pre;-webkit-text-stroke:0.2px #4a90e2;">192.168.75.232</span>
<span style="position:absolute;left:622.30px;top:459.52px;font-family:'Liberation Mono';font-size:16.4px;font-weight:400;color:#e9a23b;letter-spacing:-0.640px;line-height:1;white-space:pre;-webkit-text-stroke:0.2px #e9a23b;">63866</span>
<span style="position:absolute;left:725.90px;top:459.52px;font-family:'Liberation Mono';font-size:16.4px;font-weight:400;color:#4a90e2;letter-spacing:-0.640px;line-height:1;white-space:pre;-webkit-text-stroke:0.2px #4a90e2;">13.226.138.27</span>
<span style="position:absolute;left:883.70px;top:459.52px;font-family:'Liberation Mono';font-size:16.4px;font-weight:400;color:#e9a23b;letter-spacing:-0.640px;line-height:1;white-space:pre;-webkit-text-stroke:0.2px #e9a23b;">443</span>
<span style="position:absolute;left:1036.09px;top:459.52px;font-family:'Liberation Mono';font-size:16.4px;font-weight:400;color:#e9694d;letter-spacing:-0.640px;line-height:1;white-space:pre;-webkit-text-stroke:0.2px #e9694d;">1,171</span>
<span style="position:absolute;left:1130.69px;top:459.52px;font-family:'Liberation Mono';font-size:16.4px;font-weight:400;color:#e9694d;letter-spacing:-0.640px;line-height:1;white-space:pre;-webkit-text-stroke:0.2px #e9694d;">337,777</span>
<span style="position:absolute;left:1252.69px;top:459.52px;font-family:'Liberation Mono';font-size:16.4px;font-weight:400;color:#e9694d;letter-spacing:-0.640px;line-height:1;white-space:pre;-webkit-text-stroke:0.2px #e9694d;">338,948</span>
<span style="position:absolute;left:288.70px;top:490.52px;font-family:'Liberation Mono';font-size:16.4px;font-weight:400;color:#3a3a3a;letter-spacing:-0.640px;line-height:1;white-space:pre;-webkit-text-stroke:0.2px #3a3a3a;">CntdHr1IF18nHGVSM5</span>
<span style="position:absolute;left:473.40px;top:490.52px;font-family:'Liberation Mono';font-size:16.4px;font-weight:400;color:#4a90e2;letter-spacing:-0.640px;line-height:1;white-space:pre;-webkit-text-stroke:0.2px #4a90e2;">192.168.75.232</span>
<span style="position:absolute;left:622.70px;top:490.52px;font-family:'Liberation Mono';font-size:16.4px;font-weight:400;color:#e9a23b;letter-spacing:-0.640px;line-height:1;white-space:pre;-webkit-text-stroke:0.2px #e9a23b;">49310</span>
<span style="position:absolute;left:725.90px;top:490.52px;font-family:'Liberation Mono';font-size:16.4px;font-weight:400;color:#4a90e2;letter-spacing:-0.640px;line-height:1;white-space:pre;-webkit-text-stroke:0.2px #4a90e2;">13.226.138.27</span>
<span style="position:absolute;left:883.70px;top:490.52px;font-family:'Liberation Mono';font-size:16.4px;font-weight:400;color:#e9a23b;letter-spacing:-0.640px;line-height:1;white-space:pre;-webkit-text-stroke:0.2px #e9a23b;">443</span>
<span style="position:absolute;left:1036.09px;top:490.52px;font-family:'Liberation Mono';font-size:16.4px;font-weight:400;color:#e9694d;letter-spacing:-0.640px;line-height:1;white-space:pre;-webkit-text-stroke:0.2px #e9694d;">5,824</span>
<span style="position:absolute;left:1130.59px;top:490.52px;font-family:'Liberation Mono';font-size:16.4px;font-weight:400;color:#e9694d;letter-spacing:-0.640px;line-height:1;white-space:pre;-webkit-text-stroke:0.2px #e9694d;">313,892</span>
<span style="position:absolute;left:1252.69px;top:490.52px;font-family:'Liberation Mono';font-size:16.4px;font-weight:400;color:#e9694d;letter-spacing:-0.640px;line-height:1;white-space:pre;-webkit-text-stroke:0.2px #e9694d;">319,716</span>
<span style="position:absolute;left:288.70px;top:521.77px;font-family:'Liberation Mono';font-size:16.4px;font-weight:400;color:#3a3a3a;letter-spacing:-0.640px;line-height:1;white-space:pre;-webkit-text-stroke:0.2px #3a3a3a;">C54qQS39BrVwoEEanj</span>
<span style="position:absolute;left:473.40px;top:521.77px;font-family:'Liberation Mono';font-size:16.4px;font-weight:400;color:#4a90e2;letter-spacing:-0.640px;line-height:1;white-space:pre;-webkit-text-stroke:0.2px #4a90e2;">192.168.75.232</span>
<span style="position:absolute;left:622.50px;top:521.77px;font-family:'Liberation Mono';font-size:16.4px;font-weight:400;color:#e9a23b;letter-spacing:-0.640px;line-height:1;white-space:pre;-webkit-text-stroke:0.2px #e9a23b;">57475</span>
<span style="position:absolute;left:725.90px;top:521.77px;font-family:'Liberation Mono';font-size:16.4px;font-weight:400;color:#4a90e2;letter-spacing:-0.640px;line-height:1;white-space:pre;-webkit-text-stroke:0.2px #4a90e2;">13.107.21.200</span>
<span style="position:absolute;left:883.70px;top:521.77px;font-family:'Liberation Mono';font-size:16.4px;font-weight:400;color:#e9a23b;letter-spacing:-0.640px;line-height:1;white-space:pre;-webkit-text-stroke:0.2px #e9a23b;">443</span>
<span style="position:absolute;left:1017.69px;top:521.77px;font-family:'Liberation Mono';font-size:16.4px;font-weight:400;color:#e9694d;letter-spacing:-0.640px;line-height:1;white-space:pre;-webkit-text-stroke:0.2px #e9694d;">101,071</span>
<span style="position:absolute;left:1130.49px;top:521.77px;font-family:'Liberation Mono';font-size:16.4px;font-weight:400;color:#e9694d;letter-spacing:-0.640px;line-height:1;white-space:pre;-webkit-text-stroke:0.2px #e9694d;">218,515</span>
<span style="position:absolute;left:1252.69px;top:521.77px;font-family:'Liberation Mono';font-size:16.4px;font-weight:400;color:#e9694d;letter-spacing:-0.640px;line-height:1;white-space:pre;-webkit-text-stroke:0.2px #e9694d;">319,586</span>
<span style="position:absolute;left:288.70px;top:553.52px;font-family:'Liberation Mono';font-size:16.4px;font-weight:400;color:#3a3a3a;letter-spacing:-0.640px;line-height:1;white-space:pre;-webkit-text-stroke:0.2px #3a3a3a;">CE8BkC31jdXsQanZO9</span>
<span style="position:absolute;left:473.40px;top:553.52px;font-family:'Liberation Mono';font-size:16.4px;font-weight:400;color:#4a90e2;letter-spacing:-0.640px;line-height:1;white-space:pre;-webkit-text-stroke:0.2px #4a90e2;">192.168.75.232</span>
<span style="position:absolute;left:622.50px;top:553.52px;font-family:'Liberation Mono';font-size:16.4px;font-weight:400;color:#e9a23b;letter-spacing:-0.640px;line-height:1;white-space:pre;-webkit-text-stroke:0.2px #e9a23b;">58547</span>
<span style="position:absolute;left:725.90px;top:553.52px;font-family:'Liberation Mono';font-size:16.4px;font-weight:400;color:#4a90e2;letter-spacing:-0.640px;line-height:1;white-space:pre;-webkit-text-stroke:0.2px #4a90e2;">13.107.21.200</span>
<span style="position:absolute;left:883.70px;top:553.52px;font-family:'Liberation Mono';font-size:16.4px;font-weight:400;color:#e9a23b;letter-spacing:-0.640px;line-height:1;white-space:pre;-webkit-text-stroke:0.2px #e9a23b;">443</span>
<span style="position:absolute;left:1027.19px;top:553.52px;font-family:'Liberation Mono';font-size:16.4px;font-weight:400;color:#e9694d;letter-spacing:-0.640px;line-height:1;white-space:pre;-webkit-text-stroke:0.2px #e9694d;">61,678</span>
<span style="position:absolute;left:1130.49px;top:553.52px;font-family:'Liberation Mono';font-size:16.4px;font-weight:400;color:#e9694d;letter-spacing:-0.640px;line-height:1;white-space:pre;-webkit-text-stroke:0.2px #e9694d;">173,809</span>
<span style="position:absolute;left:1252.89px;top:553.52px;font-family:'Liberation Mono';font-size:16.4px;font-weight:400;color:#e9694d;letter-spacing:-0.640px;line-height:1;white-space:pre;-webkit-text-stroke:0.2px #e9694d;">235,487</span>
<span style="position:absolute;left:288.70px;top:584.52px;font-family:'Liberation Mono';font-size:16.4px;font-weight:400;color:#3a3a3a;letter-spacing:-0.640px;line-height:1;white-space:pre;-webkit-text-stroke:0.2px #3a3a3a;">CSh5gG4ErHO2RJWVV2</span>
<span style="position:absolute;left:473.40px;top:584.52px;font-family:'Liberation Mono';font-size:16.4px;font-weight:400;color:#4a90e2;letter-spacing:-0.640px;line-height:1;white-space:pre;-webkit-text-stroke:0.2px #4a90e2;">192.168.75.133</span>
<span style="position:absolute;left:622.40px;top:584.52px;font-family:'Liberation Mono';font-size:16.4px;font-weight:400;color:#e9a23b;letter-spacing:-0.640px;line-height:1;white-space:pre;-webkit-text-stroke:0.2px #e9a23b;">1070</span>
<span style="position:absolute;left:725.90px;top:584.52px;font-family:'Liberation Mono';font-size:16.4px;font-weight:400;color:#4a90e2;letter-spacing:-0.640px;line-height:1;white-space:pre;-webkit-text-stroke:0.2px #4a90e2;">104.88.193.162</span>
<span style="position:absolute;left:883.70px;top:584.52px;font-family:'Liberation Mono';font-size:16.4px;font-weight:400;color:#e9a23b;letter-spacing:-0.640px;line-height:1;white-space:pre;-webkit-text-stroke:0.2px #e9a23b;">443</span>
<span style="position:absolute;left:1036.09px;top:584.52px;font-family:'Liberation Mono';font-size:16.4px;font-weight:400;color:#e9694d;letter-spacing:-0.640px;line-height:1;white-space:pre;-webkit-text-stroke:0.2px #e9694d;">1,001</span>
<span style="position:absolute;left:1130.49px;top:584.52px;font-family:'Liberation Mono';font-size:16.4px;font-weight:400;color:#e9694d;letter-spacing:-0.640px;line-height:1;white-space:pre;-webkit-text-stroke:0.2px #e9694d;">223,585</span>
<span style="position:absolute;left:1252.69px;top:584.52px;font-family:'Liberation Mono';font-size:16.4px;font-weight:400;color:#e9694d;letter-spacing:-0.640px;line-height:1;white-space:pre;-webkit-text-stroke:0.2px #e9694d;">224,586</span>
<span style="position:absolute;left:288.70px;top:615.52px;font-family:'Liberation Mono';font-size:16.4px;font-weight:400;color:#3a3a3a;letter-spacing:-0.640px;line-height:1;white-space:pre;-webkit-text-stroke:0.2px #3a3a3a;">Ctt7fh3eEX3RR2Yj1j</span>
<span style="position:absolute;left:473.40px;top:615.52px;font-family:'Liberation Mono';font-size:16.4px;font-weight:400;color:#4a90e2;letter-spacing:-0.640px;line-height:1;white-space:pre;-webkit-text-stroke:0.2px #4a90e2;">192.168.75.232</span>
<span style="position:absolute;left:622.70px;top:615.52px;font-family:'Liberation Mono';font-size:16.4px;font-weight:400;color:#e9a23b;letter-spacing:-0.640px;line-height:1;white-space:pre;-webkit-text-stroke:0.2px #e9a23b;">49185</span>
<span style="position:absolute;left:725.90px;top:615.52px;font-family:'Liberation Mono';font-size:16.4px;font-weight:400;color:#4a90e2;letter-spacing:-0.640px;line-height:1;white-space:pre;-webkit-text-stroke:0.2px #4a90e2;">13.226.138.27</span>
<span style="position:absolute;left:883.70px;top:615.52px;font-family:'Liberation Mono';font-size:16.4px;font-weight:400;color:#e9a23b;letter-spacing:-0.640px;line-height:1;white-space:pre;-webkit-text-stroke:0.2px #e9a23b;">443</span>
<span style="position:absolute;left:1036.39px;top:615.52px;font-family:'Liberation Mono';font-size:16.4px;font-weight:400;color:#e9694d;letter-spacing:-0.640px;line-height:1;white-space:pre;-webkit-text-stroke:0.2px #e9694d;">5,105</span>
<span style="position:absolute;left:1130.19px;top:615.52px;font-family:'Liberation Mono';font-size:16.4px;font-weight:400;color:#e9694d;letter-spacing:-0.640px;line-height:1;white-space:pre;-webkit-text-stroke:0.2px #e9694d;">212,661</span>
<span style="position:absolute;left:1252.69px;top:615.52px;font-family:'Liberation Mono';font-size:16.4px;font-weight:400;color:#e9694d;letter-spacing:-0.640px;line-height:1;white-space:pre;-webkit-text-stroke:0.2px #e9694d;">217,766</span>
<span style="position:absolute;left:288.70px;top:646.77px;font-family:'Liberation Mono';font-size:16.4px;font-weight:400;color:#3a3a3a;letter-spacing:-0.640px;line-height:1;white-space:pre;-webkit-text-stroke:0.2px #3a3a3a;">CiiMcU2i4wJDQnhkda</span>
<span style="position:absolute;left:473.40px;top:646.77px;font-family:'Liberation Mono';font-size:16.4px;font-weight:400;color:#4a90e2;letter-spacing:-0.640px;line-height:1;white-space:pre;-webkit-text-stroke:0.2px #4a90e2;">192.168.75.232</span>
<span style="position:absolute;left:622.30px;top:646.77px;font-family:'Liberation Mono';font-size:16.4px;font-weight:400;color:#e9a23b;letter-spacing:-0.640px;line-height:1;white-space:pre;-webkit-text-stroke:0.2px #e9a23b;">65041</span>
<span style="position:absolute;left:725.90px;top:646.77px;font-family:'Liberation Mono';font-size:16.4px;font-weight:400;color:#4a90e2;letter-spacing:-0.640px;line-height:1;white-space:pre;-webkit-text-stroke:0.2px #4a90e2;">205.185.216.10</span>
<span style="position:absolute;left:883.70px;top:646.77px;font-family:'Liberation Mono';font-size:16.4px;font-weight:400;color:#e9a23b;letter-spacing:-0.640px;line-height:1;white-space:pre;-webkit-text-stroke:0.2px #e9a23b;">443</span>
<span style="position:absolute;left:1036.39px;top:646.77px;font-family:'Liberation Mono';font-size:16.4px;font-weight:400;color:#e9694d;letter-spacing:-0.640px;line-height:1;white-space:pre;-webkit-text-stroke:0.2px #e9694d;">3,339</span>
<span style="position:absolute;left:1130.69px;top:646.77px;font-family:'Liberation Mono';font-size:16.4px;font-weight:400;color:#e9694d;letter-spacing:-0.640px;line-height:1;white-space:pre;-webkit-text-stroke:0.2px #e9694d;">198,017</span>
<span style="position:absolute;left:1252.69px;top:646.77px;font-family:'Liberation Mono';font-size:16.4px;font-weight:400;color:#e9694d;letter-spacing:-0.640px;line-height:1;white-space:pre;-webkit-text-stroke:0.2px #e9694d;">201,356</span>
<span style="position:absolute;left:288.70px;top:678.52px;font-family:'Liberation Mono';font-size:16.4px;font-weight:400;color:#3a3a3a;letter-spacing:-0.640px;line-height:1;white-space:pre;-webkit-text-stroke:0.2px #3a3a3a;">CC4Awn35IDteNhE0Yl</span>
<span style="position:absolute;left:473.40px;top:678.52px;font-family:'Liberation Mono';font-size:16.4px;font-weight:400;color:#4a90e2;letter-spacing:-0.640px;line-height:1;white-space:pre;-webkit-text-stroke:0.2px #4a90e2;">192.168.75.232</span>
<span style="position:absolute;left:622.50px;top:678.52px;font-family:'Liberation Mono';font-size:16.4px;font-weight:400;color:#e9a23b;letter-spacing:-0.640px;line-height:1;white-space:pre;-webkit-text-stroke:0.2px #e9a23b;">51426</span>
<span style="position:absolute;left:725.90px;top:678.52px;font-family:'Liberation Mono';font-size:16.4px;font-weight:400;color:#4a90e2;letter-spacing:-0.640px;line-height:1;white-space:pre;-webkit-text-stroke:0.2px #4a90e2;">13.107.213.51</span>
<span style="position:absolute;left:883.70px;top:678.52px;font-family:'Liberation Mono';font-size:16.4px;font-weight:400;color:#e9a23b;letter-spacing:-0.640px;line-height:1;white-space:pre;-webkit-text-stroke:0.2px #e9a23b;">443</span>
<span style="position:absolute;left:1036.09px;top:678.52px;font-family:'Liberation Mono';font-size:16.4px;font-weight:400;color:#e9694d;letter-spacing:-0.640px;line-height:1;white-space:pre;-webkit-text-stroke:0.2px #e9694d;">3,381</span>
<span style="position:absolute;left:1130.49px;top:678.52px;font-family:'Liberation Mono';font-size:16.4px;font-weight:400;color:#e9694d;letter-spacing:-0.640px;line-height:1;white-space:pre;-webkit-text-stroke:0.2px #e9694d;">196,036</span>
<span style="position:absolute;left:1252.89px;top:678.52px;font-family:'Liberation Mono';font-size:16.4px;font-weight:400;color:#e9694d;letter-spacing:-0.640px;line-height:1;white-space:pre;-webkit-text-stroke:0.2px #e9694d;">199,417</span>
<span style="position:absolute;left:288.70px;top:709.52px;font-family:'Liberation Mono';font-size:16.4px;font-weight:400;color:#3a3a3a;letter-spacing:-0.640px;line-height:1;white-space:pre;-webkit-text-stroke:0.2px #3a3a3a;">COVWJgHg2xBy72cYd</span>
<span style="position:absolute;left:473.40px;top:709.52px;font-family:'Liberation Mono';font-size:16.4px;font-weight:400;color:#4a90e2;letter-spacing:-0.640px;line-height:1;white-space:pre;-webkit-text-stroke:0.2px #4a90e2;">192.168.75.133</span>
<span style="position:absolute;left:622.40px;top:709.52px;font-family:'Liberation Mono';font-size:16.4px;font-weight:400;color:#e9a23b;letter-spacing:-0.640px;line-height:1;white-space:pre;-webkit-text-stroke:0.2px #e9a23b;">1067</span>
<span style="position:absolute;left:725.90px;top:709.52px;font-family:'Liberation Mono';font-size:16.4px;font-weight:400;color:#4a90e2;letter-spacing:-0.640px;line-height:1;white-space:pre;-webkit-text-stroke:0.2px #4a90e2;">104.88.193.243</span>
<span style="position:absolute;left:883.70px;top:709.52px;font-family:'Liberation Mono';font-size:16.4px;font-weight:400;color:#e9a23b;letter-spacing:-0.640px;line-height:1;white-space:pre;-webkit-text-stroke:0.2px #e9a23b;">443</span>
<span style="position:absolute;left:1054.80px;top:709.52px;font-family:'Liberation Mono';font-size:16.4px;font-weight:400;color:#e9694d;letter-spacing:-0.640px;line-height:1;white-space:pre;-webkit-text-stroke:0.2px #e9694d;">583</span>
<span style="position:absolute;left:1130.49px;top:709.52px;font-family:'Liberation Mono';font-size:16.4px;font-weight:400;color:#e9694d;letter-spacing:-0.640px;line-height:1;white-space:pre;-webkit-text-stroke:0.2px #e9694d;">178,216</span>
<span style="position:absolute;left:1252.69px;top:709.52px;font-family:'Liberation Mono';font-size:16.4px;font-weight:400;color:#e9694d;letter-spacing:-0.640px;line-height:1;white-space:pre;-webkit-text-stroke:0.2px #e9694d;">178,799</span>
<span style="position:absolute;left:288.70px;top:740.52px;font-family:'Liberation Mono';font-size:16.4px;font-weight:400;color:#3a3a3a;letter-spacing:-0.640px;line-height:1;white-space:pre;-webkit-text-stroke:0.2px #3a3a3a;">ClM6ni3aXLJlWed2Kg</span>
<span style="position:absolute;left:473.40px;top:740.52px;font-family:'Liberation Mono';font-size:16.4px;font-weight:400;color:#4a90e2;letter-spacing:-0.640px;line-height:1;white-space:pre;-webkit-text-stroke:0.2px #4a90e2;">192.168.75.232</span>
<span style="position:absolute;left:622.50px;top:740.52px;font-family:'Liberation Mono';font-size:16.4px;font-weight:400;color:#e9a23b;letter-spacing:-0.640px;line-height:1;white-space:pre;-webkit-text-stroke:0.2px #e9a23b;">52700</span>
<span style="position:absolute;left:725.90px;top:740.52px;font-family:'Liberation Mono';font-size:16.4px;font-weight:400;color:#4a90e2;letter-spacing:-0.640px;line-height:1;white-space:pre;-webkit-text-stroke:0.2px #4a90e2;">143.204.0.2</span>
<span style="position:absolute;left:883.70px;top:740.52px;font-family:'Liberation Mono';font-size:16.4px;font-weight:400;color:#e9a23b;letter-spacing:-0.640px;line-height:1;white-space:pre;-webkit-text-stroke:0.2px #e9a23b;">443</span>
<span style="position:absolute;left:1036.39px;top:740.52px;font-family:'Liberation Mono';font-size:16.4px;font-weight:400;color:#e9694d;letter-spacing:-0.640px;line-height:1;white-space:pre;-webkit-text-stroke:0.2px #e9694d;">1,165</span>
<span style="position:absolute;left:1130.59px;top:740.52px;font-family:'Liberation Mono';font-size:16.4px;font-weight:400;color:#e9694d;letter-spacing:-0.640px;line-height:1;white-space:pre;-webkit-text-stroke:0.2px #e9694d;">162,842</span>
<span style="position:absolute;left:1252.89px;top:740.52px;font-family:'Liberation Mono';font-size:16.4px;font-weight:400;color:#e9694d;letter-spacing:-0.640px;line-height:1;white-space:pre;-webkit-text-stroke:0.2px #e9694d;">164,007</span>
<span style="position:absolute;left:288.70px;top:771.77px;font-family:'Liberation Mono';font-size:16.4px;font-weight:400;color:#3a3a3a;letter-spacing:-0.640px;line-height:1;white-space:pre;-webkit-text-stroke:0.2px #3a3a3a;">CXEos84qlsCpreczml</span>
<span style="position:absolute;left:473.40px;top:771.77px;font-family:'Liberation Mono';font-size:16.4px;font-weight:400;color:#4a90e2;letter-spacing:-0.640px;line-height:1;white-space:pre;-webkit-text-stroke:0.2px #4a90e2;">192.168.75.232</span>
<span style="position:absolute;left:622.30px;top:771.77px;font-family:'Liberation Mono';font-size:16.4px;font-weight:400;color:#e9a23b;letter-spacing:-0.640px;line-height:1;white-space:pre;-webkit-text-stroke:0.2px #e9a23b;">60984</span>
<span style="position:absolute;left:725.90px;top:771.77px;font-family:'Liberation Mono';font-size:16.4px;font-weight:400;color:#4a90e2;letter-spacing:-0.640px;line-height:1;white-space:pre;-webkit-text-stroke:0.2px #4a90e2;">13.107.21.200</span>
<span style="position:absolute;left:883.70px;top:771.77px;font-family:'Liberation Mono';font-size:16.4px;font-weight:400;color:#e9a23b;letter-spacing:-0.640px;line-height:1;white-space:pre;-webkit-text-stroke:0.2px #e9a23b;">443</span>
<span style="position:absolute;left:1036.39px;top:771.77px;font-family:'Liberation Mono';font-size:16.4px;font-weight:400;color:#e9694d;letter-spacing:-0.640px;line-height:1;white-space:pre;-webkit-text-stroke:0.2px #e9694d;">9,835</span>
<span style="position:absolute;left:1130.19px;top:771.77px;font-family:'Liberation Mono';font-size:16.4px;font-weight:400;color:#e9694d;letter-spacing:-0.640px;line-height:1;white-space:pre;-webkit-text-stroke:0.2px #e9694d;">147,401</span>
<span style="position:absolute;left:1252.69px;top:771.77px;font-family:'Liberation Mono';font-size:16.4px;font-weight:400;color:#e9694d;letter-spacing:-0.640px;line-height:1;white-space:pre;-webkit-text-stroke:0.2px #e9694d;">157,236</span>
<span style="position:absolute;left:288.70px;top:803.52px;font-family:'Liberation Mono';font-size:16.4px;font-weight:400;color:#3a3a3a;letter-spacing:-0.640px;line-height:1;white-space:pre;-webkit-text-stroke:0.2px #3a3a3a;">CBweDf2SpBKtYZZOi</span>
<span style="position:absolute;left:473.40px;top:803.52px;font-family:'Liberation Mono';font-size:16.4px;font-weight:400;color:#4a90e2;letter-spacing:-0.640px;line-height:1;white-space:pre;-webkit-text-stroke:0.2px #4a90e2;">192.168.75.232</span>
<span style="position:absolute;left:622.50px;top:803.52px;font-family:'Liberation Mono';font-size:16.4px;font-weight:400;color:#e9a23b;letter-spacing:-0.640px;line-height:1;white-space:pre;-webkit-text-stroke:0.2px #e9a23b;">57116</span>
<span style="position:absolute;left:725.90px;top:803.52px;font-family:'Liberation Mono';font-size:16.4px;font-weight:400;color:#4a90e2;letter-spacing:-0.640px;line-height:1;white-space:pre;-webkit-text-stroke:0.2px #4a90e2;">13.107.21.200</span>
<span style="position:absolute;left:883.70px;top:803.52px;font-family:'Liberation Mono';font-size:16.4px;font-weight:400;color:#e9a23b;letter-spacing:-0.640px;line-height:1;white-space:pre;-webkit-text-stroke:0.2px #e9a23b;">443</span>
<span style="position:absolute;left:1027.09px;top:803.52px;font-family:'Liberation Mono';font-size:16.4px;font-weight:400;color:#e9694d;letter-spacing:-0.640px;line-height:1;white-space:pre;-webkit-text-stroke:0.2px #e9694d;">20,370</span>
<span style="position:absolute;left:1130.19px;top:803.52px;font-family:'Liberation Mono';font-size:16.4px;font-weight:400;color:#e9694d;letter-spacing:-0.640px;line-height:1;white-space:pre;-webkit-text-stroke:0.2px #e9694d;">136,651</span>
<span style="position:absolute;left:1252.39px;top:803.52px;font-family:'Liberation Mono';font-size:16.4px;font-weight:400;color:#e9694d;letter-spacing:-0.640px;line-height:1;white-space:pre;-webkit-text-stroke:0.2px #e9694d;">157,021</span>
<div style="position:absolute;left:281px;top:817px;width:1632px;height:9px;background:#f1f1f1"></div>
<div style="position:absolute;left:299.2px;top:820px;width:1557px;height:6px;background:#c1c1c1"></div>
<svg style="position:absolute;left:287px;top:821px;overflow:visible" width="6" height="5" viewBox="0 0 6 5"><path d="M5.5 0.5V9.5L0.5 5Z" fill="#a3a3a3"/></svg>
<svg style="position:absolute;left:1882px;top:821px;overflow:visible" width="6" height="5" viewBox="0 0 6 5"><path d="M0.5 0.5V9.5L5.5 5Z" fill="#505050"/></svg>
</body></html>
